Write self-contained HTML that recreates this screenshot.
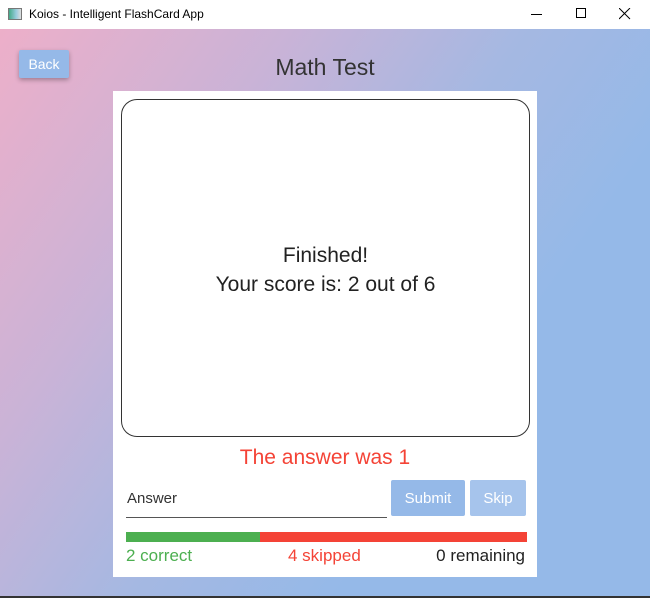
<!DOCTYPE html>
<html><head><style>
*{margin:0;padding:0;box-sizing:border-box}
body{width:650px;height:598px;overflow:hidden;font-family:"Liberation Sans",sans-serif;position:relative;background:#fff}
.t{position:absolute;left:0;top:0;width:650px;height:29px;background:#fff;font-size:12px;color:#000}
.bg{position:absolute;left:0;top:29px;width:650px;height:567px;background:linear-gradient(125deg,#edafc9 0%,#c9b3d7 28%,#a5b8e2 50%,#95b9e8 70%,#95b9e8 100%)}
.ab{position:absolute}
</style></head><body>
<div class="t">
<div class="ab" style="left:8px;top:8px;width:14px;height:12px;border:1px solid #777;background:linear-gradient(90deg,#4a8 0,#9cd 60%,#ddd 100%)"></div>
<div class="ab" style="left:29px;top:7px">Koios - Intelligent FlashCard App</div>
<div class="ab" style="left:531px;top:14px;width:11px;height:1px;background:#000"></div>
<div class="ab" style="left:576px;top:8px;width:10px;height:10px;border:1px solid #000"></div>
<svg class="ab" style="left:619px;top:8px" width="12" height="12"><path d="M0 0L11 11M11 0L0 11" stroke="#000" stroke-width="1"/></svg>
</div>
<div class="bg"></div>
<div class="ab" style="left:0;top:596px;width:650px;height:2px;background:#333"></div>
<div class="ab" style="left:19px;top:50px;width:50px;height:28px;background:#95b9e8;border-radius:2px;box-shadow:0 2px 5px rgba(0,0,0,.3);color:#fff;font-size:14px;text-align:center;line-height:28px">Back</div>
<div class="ab" style="left:0;top:54px;width:650px;text-align:center;font-size:23px;color:#333">Math Test</div>
<div class="ab" style="left:113px;top:91px;width:424px;height:486px;background:#fff"></div>
<div class="ab" style="left:121px;top:99px;width:409px;height:338px;border:1px solid #333;border-radius:16px;padding-top:4px;display:flex;flex-direction:column;justify-content:center;align-items:center;font-size:21px;color:#222;line-height:29px;text-align:center">Finished!<br>Your score is: 2 out of 6</div>
<div class="ab" style="left:113px;top:446px;width:424px;text-align:center;font-size:21px;color:#f44336">The answer was 1</div>
<div class="ab" style="left:127px;top:490px;font-size:15px;color:#333">Answer</div>
<div class="ab" style="left:126px;top:517px;width:261px;height:1px;background:#555"></div>
<div class="ab" style="left:391px;top:480px;width:74px;height:36px;background:#95b9e8;border-radius:2px;color:#fff;font-size:15px;text-align:center;line-height:38px">Submit</div>
<div class="ab" style="left:470px;top:480px;width:56px;height:36px;background:#a6c4ec;border-radius:2px;color:#fff;font-size:15px;text-align:center;line-height:38px">Skip</div>
<div class="ab" style="left:126px;top:532px;width:134px;height:10px;background:#4caf50"></div>
<div class="ab" style="left:260px;top:532px;width:267px;height:10px;background:#f44336"></div>
<div class="ab" style="left:126px;top:546px;font-size:17px;color:#4caf50">2 correct</div>
<div class="ab" style="left:288px;top:546px;font-size:17px;color:#f44336">4 skipped</div>
<div class="ab" style="right:125px;top:546px;font-size:17px;color:#222">0 remaining</div>
</body></html>
